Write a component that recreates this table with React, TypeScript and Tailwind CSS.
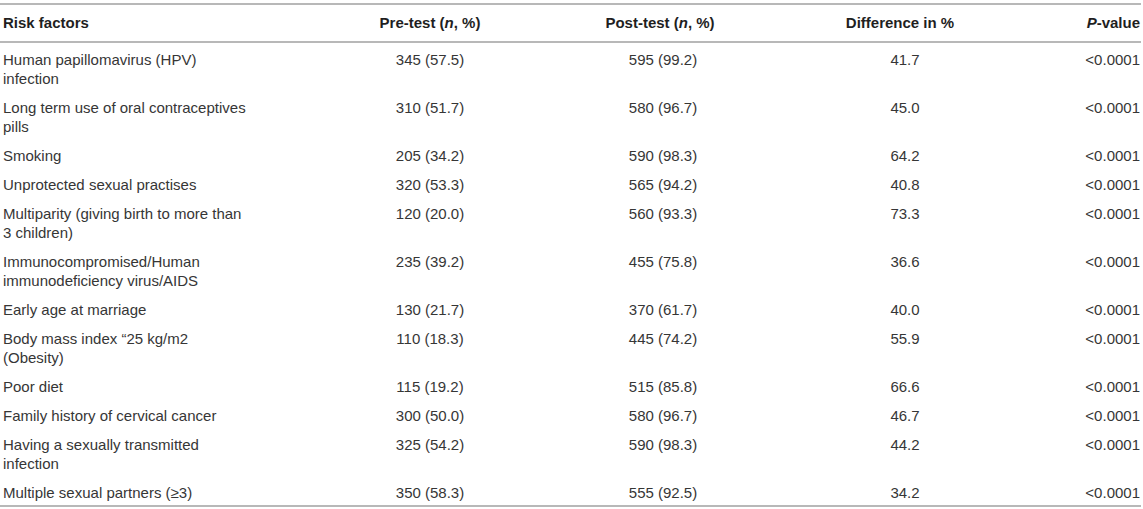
const rows = [
  { factor: ["Human papillomavirus (HPV)", "infection"], pre: "345 (57.5)", post: "595 (99.2)", diff: "41.7" },
  { factor: ["Long term use of oral contraceptives", "pills"], pre: "310 (51.7)", post: "580 (96.7)", diff: "45.0" },
  { factor: ["Smoking"], pre: "205 (34.2)", post: "590 (98.3)", diff: "64.2" },
  { factor: ["Unprotected sexual practises"], pre: "320 (53.3)", post: "565 (94.2)", diff: "40.8" },
  { factor: ["Multiparity (giving birth to more than", "3 children)"], pre: "120 (20.0)", post: "560 (93.3)", diff: "73.3" },
  { factor: ["Immunocompromised/Human", "immunodeficiency virus/AIDS"], pre: "235 (39.2)", post: "455 (75.8)", diff: "36.6" },
  { factor: ["Early age at marriage"], pre: "130 (21.7)", post: "370 (61.7)", diff: "40.0" },
  { factor: ["Body mass index \u201c25 kg/m2", "(Obesity)"], pre: "110 (18.3)", post: "445 (74.2)", diff: "55.9" },
  { factor: ["Poor diet"], pre: "115 (19.2)", post: "515 (85.8)", diff: "66.6" },
  { factor: ["Family history of cervical cancer"], pre: "300 (50.0)", post: "580 (96.7)", diff: "46.7" },
  { factor: ["Having a sexually transmitted", "infection"], pre: "325 (54.2)", post: "590 (98.3)", diff: "44.2" },
  { factor: ["Multiple sexual partners (\u22653)"], pre: "350 (58.3)", post: "555 (92.5)", diff: "34.2" },
];

export default function App() {
  return (
    <div className="bg-white pt-[3px] pr-[2px] font-['Liberation_Sans',Arial,sans-serif] text-[15px] text-[#363636]">
      <table className="w-full table-fixed border-collapse border-t-2 border-b-2 border-[#b8b8b8]">
        <colgroup>
          <col className="w-[330px]" />
          <col className="w-[200px]" />
          <col className="w-[260px]" />
          <col className="w-[220px]" />
          <col />
        </colgroup>
        <thead>
          <tr className="h-[38px] border-b-2 border-[#b8b8b8] text-[#1f1f1f]">
            <th className="pl-[3px] text-left font-bold">Risk factors</th>
            <th className="text-center font-bold">
              Pre-test (<i>n</i>, %)
            </th>
            <th className="text-center font-bold">
              Post-test (<i>n</i>, %)
            </th>
            <th className="text-center font-bold">Difference in %</th>
            <th className="pr-[1px] text-right font-bold">
              <i>P</i>-value
            </th>
          </tr>
        </thead>
        <tbody>
          {rows.map((r) => (
            <tr key={r.factor[0]} className="align-top leading-[19px]">
              <td className="pl-[3px] pt-[7px] pb-[3px]">
                {r.factor.map((line) => (
                  <div key={line} className="whitespace-nowrap">
                    {line}
                  </div>
                ))}
              </td>
              <td className="pt-[7px] text-center">{r.pre}</td>
              <td className="pt-[7px] pl-[6px] text-center">{r.post}</td>
              <td className="pt-[7px] pl-[10px] text-center">{r.diff}</td>
              <td className="pt-[7px] pr-[1px] text-right">&lt;0.0001</td>
            </tr>
          ))}
        </tbody>
      </table>
    </div>
  );
}
